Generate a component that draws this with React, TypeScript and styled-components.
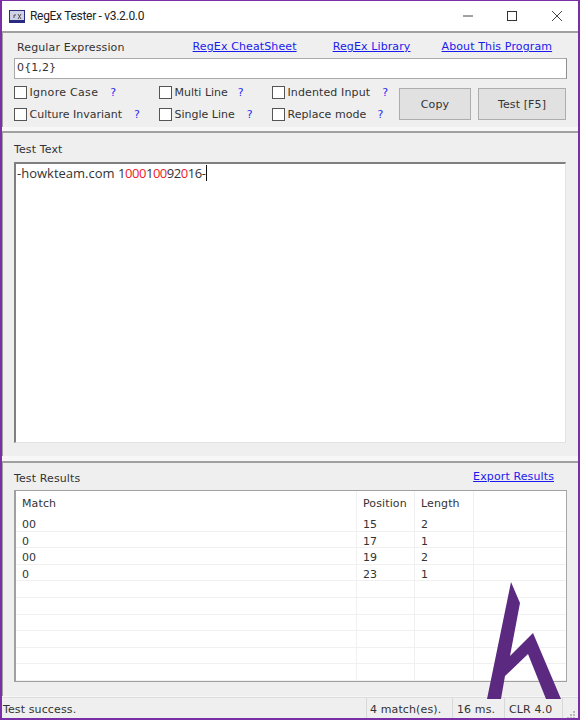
import React from "react";
import styled, { createGlobalStyle } from "styled-components";

const Global = createGlobalStyle`
  html, body { margin: 0; padding: 0; background: #fff; }
  #root { width: 580px; height: 720px; }
  * { box-sizing: border-box; }
`;

const ui = `"DejaVu Sans", Verdana, sans-serif`;

const Win = styled.div`
  position: relative;
  width: 580px;
  height: 720px;
  display: flex;
  flex-direction: column;
  background: #f7f7f7;
  border-top: 1px solid #7b2fa6;
  border-left: 2px solid #7b2fa6;
  border-right: 2px solid #7b2fa6;
  border-bottom: 2px solid #7b2fa6;
  overflow: hidden;
  font: 11px ${ui};
  letter-spacing: 0.12px;
  color: #333;
`;
const TitleBar = styled.div`
  height: 30px;
  flex: none;
  background: #fff;
  display: flex;
  align-items: center;
  padding-left: 7px;
`;
const Title = styled.span`
  font: 12px Roboto, sans-serif;
  letter-spacing: -0.3px;
  color: #222;
  margin-left: 5px;
  flex: 1;
`;
const WinButton = styled.svg<{ $mr: number }>`
  width: 10px;
  height: 10px;
  flex: none;
  margin-right: ${(p) => p.$mr}px;
`;
const Panel = styled.section<{ $h: number; $gap: number }>`
  height: ${(p) => p.$h}px;
  margin-bottom: ${(p) => p.$gap}px;
  flex: none;
  background: #efefef;
  border-top: 2px solid #a0a0a0;
  border-left: 1px solid #a0a0a0;
  display: flex;
  flex-direction: column;
`;
const TopRow = styled.div`
  display: flex;
  align-items: flex-end;
  flex: none;
  height: 25px;
  padding: 0 0 4px 14px;
`;
const Label = styled.span`
  white-space: nowrap;
  color: #333;
  line-height: 13px;
`;
const Links = styled.div`
  display: flex;
  margin-left: 68px;
  margin-bottom: 1px;
`;
const Link = styled.a<{ $mr?: number; $lift?: number }>`
  color: #1a1aee;
  text-decoration: underline;
  white-space: nowrap;
  line-height: 13px;
  margin-right: ${(p) => p.$mr ?? 0}px;
  margin-bottom: ${(p) => p.$lift ?? 0}px;
`;
const Input = styled.div`
  height: 21px;
  flex: none;
  margin: 0 11px;
  background: #fff;
  border: 1px solid #a9a9a9;
  border-right-color: #8f8f8f;
  padding-left: 2px;
  line-height: 18px;
  color: #333;
`;
const OptionsArea = styled.div`
  display: flex;
  flex: none;
  margin: 7px 0 0 11px;
`;
const OptionsGrid = styled.div`
  display: grid;
  grid-template-columns: 145px 113px 127px;
  grid-template-rows: 22px 13px;
  width: 385px;
`;
const Option = styled.div<{ $ls: number }>`
  display: flex;
  align-items: center;
  height: 13px;
  letter-spacing: ${(p) => p.$ls}px;
`;
const Box = styled.span`
  width: 13px;
  height: 13px;
  flex: none;
  background: #fff;
  border: 1px solid #555;
  margin-right: 2.5px;
`;
const Help = styled.span<{ $ml: number }>`
  color: #2a2af0;
  margin-left: ${(p) => p.$ml}px;
`;
const Button = styled.button<{ $w: number; $ml: number }>`
  width: ${(p) => p.$w}px;
  height: 32px;
  flex: none;
  margin-left: ${(p) => p.$ml}px;
  margin-top: 2px;
  background: #e1e1e1;
  border: 1px solid #adadad;
  font: 11px ${ui};
  letter-spacing: 0.12px;
  color: #333;
  padding: 0;
`;
const SectionHead = styled.div<{ $h: number; $pb: number }>`
  height: ${(p) => p.$h}px;
  flex: none;
  display: flex;
  align-items: flex-end;
  padding: 0 24px ${(p) => p.$pb}px 11px;
  justify-content: space-between;
`;
const Memo = styled.div`
  height: 281px;
  flex: none;
  margin: 0 12px 0 11px;
  background: #fff;
  border: 1px solid #e2e2e2;
  border-top: 2px solid #7f7f7f;
  border-left: 2px solid #7f7f7f;
  padding: 0 0 0 1px;
  font: 13px/19px "Open Sans", sans-serif;
  letter-spacing: 0;
  color: #333;
  white-space: pre;
`;
const Digits = styled.span`
  letter-spacing: -0.45px;
`;
const Hit = styled.span`
  color: #f0202c;
`;
const Caret = styled.span`
  display: inline-block;
  width: 1px;
  height: 16px;
  background: #111;
  vertical-align: -3px;
`;
const Table = styled.div`
  height: 192px;
  flex: none;
  margin: 0 11px;
  background: #fff;
  border: 1px solid #a0a0a0;
  border-left-width: 2px;
  border-right-color: #a8a8a8;
  display: flex;
  flex-direction: column;
`;
const cols = "341px 58px 59px 1fr";
const HeadRow = styled.div`
  display: grid;
  grid-template-columns: ${cols};
  height: 24px;
  flex: none;
`;
const HeadCell = styled.div`
  padding: 5px 0 0 6px;
  line-height: 16px;
  border-right: 1px solid #f0f0f0;
  &:last-child { border-right: 0; }
`;
const Row = styled.div`
  display: grid;
  grid-template-columns: ${cols};
  height: 16.6px;
  flex: none;
  border-bottom: 1px solid #f0f0f0;
`;
const Cell = styled.div`
  padding: 1px 0 0 6px;
  line-height: 17px;
  border-right: 1px solid #f0f0f0;
  &:last-child { border-right: 0; }
`;
const Status = styled.footer`
  position: relative;
  flex: 1;
  display: grid;
  grid-template-columns: 365px 86px 52px 58px 1fr;
  background: #efefef;
  border-top: 1px solid #dcdcdc;
  margin-top: -1px;
  align-items: stretch;
`;
const StatusCell = styled.div<{ $pl: number }>`
  padding-left: ${(p) => p.$pl}px;
  line-height: 23px;
  border-right: 1px solid #d8d8d8;
  white-space: nowrap;
`;
const Grip = styled.svg`
  position: absolute;
  right: 2px;
  bottom: 1px;
  width: 10px;
  height: 10px;
`;
const Logo = styled.svg`
  position: absolute;
  left: 481px;
  top: 579px;
  width: 80px;
  height: 120px;
  pointer-events: none;
`;
const AppIcon = styled.svg`
  width: 16px;
  height: 13px;
  flex: none;
`;

const options = [
  { t: "Ignore Case", h: 12, ls: 0.3 },
  { t: "Multi Line", h: 10, ls: 0 },
  { t: "Indented Input", h: 12, ls: 0.12 },
  { t: "Culture Invariant", h: 12, ls: 0 },
  { t: "Single Line", h: 12, ls: 0 },
  { t: "Replace mode", h: 11, ls: 0.06 },
];
const rows = [
  ["00", "15", "2"],
  ["0", "17", "1"],
  ["00", "19", "2"],
  ["0", "23", "1"],
  ["", "", ""], ["", "", ""], ["", "", ""], ["", "", ""], ["", "", ""], ["", "", ""],
];

export default function App() {
  return (
    <Win>
      <Global />
      <TitleBar>
        <AppIcon viewBox="0 0 16 13">
          <rect x="0.5" y="0.5" width="15" height="12" fill="#cfd3e6" stroke="#2a2a80" />
          <rect x="1" y="10" width="14" height="2" fill="#2a2a80" />
          <path d="M5 8V5h2M9 4l3 5M12 4L9 9" fill="none" stroke="#444" strokeWidth="0.9" />
        </AppIcon>
        <Title>RegEx Tester - v3.2.0.0</Title>
        <WinButton $mr={34} viewBox="0 0 10 10"><path d="M0 5h10" stroke="#444" strokeWidth="1" /></WinButton>
        <WinButton $mr={35} viewBox="0 0 10 10"><rect x="0.5" y="0.5" width="9" height="9" fill="none" stroke="#333" /></WinButton>
        <WinButton $mr={16} viewBox="0 0 10 10"><path d="M0 0l10 10M10 0L0 10" stroke="#444" strokeWidth="1" /></WinButton>
      </TitleBar>
      <Panel $h={96} $gap={4}>
        <TopRow>
          <Label>Regular Expression</Label>
          <Links>
            <Link $mr={36}>RegEx CheatSheet</Link>
            <Link $mr={31}>RegEx Library</Link>
            <Link>About This Program</Link>
          </Links>
        </TopRow>
        <Input>0{"{1,2}"}</Input>
        <OptionsArea>
          <OptionsGrid>
            {options.map((o) => (
              <Option key={o.t} $ls={o.ls}>
                <Box />
                <Label>{o.t}</Label>
                <Help $ml={o.h}>?</Help>
              </Option>
            ))}
          </OptionsGrid>
          <Button $w={72} $ml={0}>Copy</Button>
          <Button $w={88} $ml={7}>Test [F5]</Button>
        </OptionsArea>
      </Panel>
      <Panel $h={325} $gap={5}>
        <SectionHead $h={29} $pb={6}><Label>Test Text</Label></SectionHead>
        <Memo>
          -howkteam.com <Digits>1<Hit>000</Hit>1<Hit>00</Hit>92<Hit>0</Hit>16-</Digits><Caret />
        </Memo>
      </Panel>
      <Panel $h={235} $gap={2}>
        <SectionHead $h={27} $pb={5}>
          <Label>Test Results</Label>
          <Link $lift={2}>Export Results</Link>
        </SectionHead>
        <Table>
          <HeadRow>
            <HeadCell>Match</HeadCell>
            <HeadCell>Position</HeadCell>
            <HeadCell>Length</HeadCell>
            <HeadCell />
          </HeadRow>
          {rows.map((r, i) => (
            <Row key={i}>
              <Cell>{r[0]}</Cell>
              <Cell>{r[1]}</Cell>
              <Cell>{r[2]}</Cell>
              <Cell />
            </Row>
          ))}
        </Table>
      </Panel>
      <Status>
        <StatusCell $pl={1}>Test success.</StatusCell>
        <StatusCell $pl={3}>4 match(es).</StatusCell>
        <StatusCell $pl={4}>16 ms.</StatusCell>
        <StatusCell $pl={4}>CLR 4.0</StatusCell>
        <Grip viewBox="0 0 10 10" fill="#b8b8b8">
          <rect x="7" y="1" width="2" height="2" />
          <rect x="4" y="4" width="2" height="2" />
          <rect x="7" y="4" width="2" height="2" />
          <rect x="1" y="7" width="2" height="2" />
          <rect x="4" y="7" width="2" height="2" />
          <rect x="7" y="7" width="2" height="2" />
        </Grip>
      </Status>
      <Logo viewBox="483 580 80 120">
        <path d="M511 582L520 603L510 656L533 633L561 699H546L528 654L505 676L501 699H487Z" fill="#5b2a80" />
      </Logo>
    </Win>
  );
}
